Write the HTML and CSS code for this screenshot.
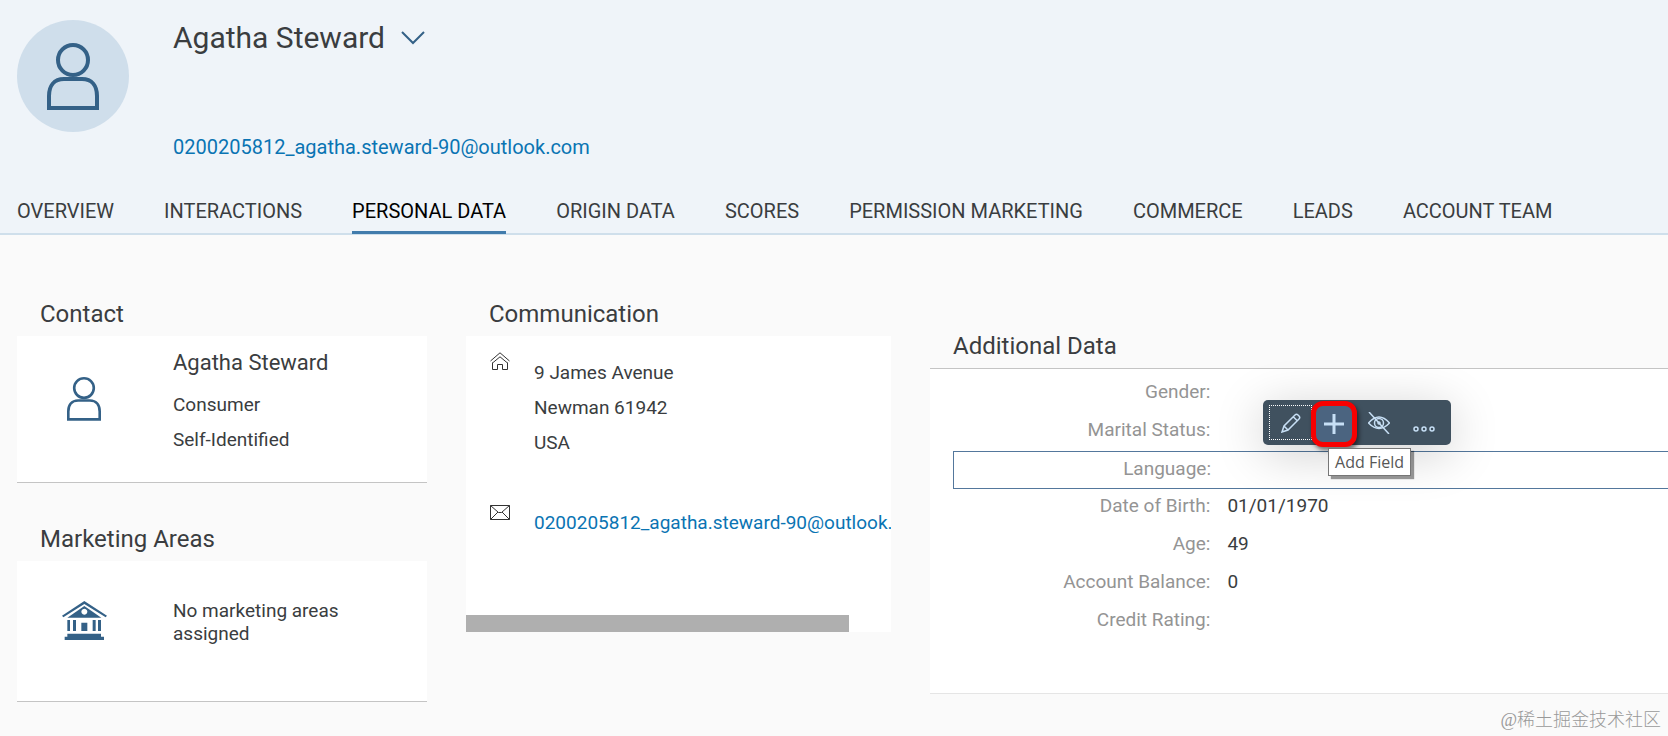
FILE: index.html
```html
<!DOCTYPE html>
<html lang="en">
  <head>
    <meta charset="UTF-8" />
    <meta name="viewport" content="width=device-width, initial-scale=1.0" />
    <title>Agatha Steward - Contact</title>
    <link rel="stylesheet" href="styles.css">
  </head>
  <body>
    <header class="header">
      <div class="profile">
        <div class="avatar">
          <svg class="person" viewBox="0 0 52 68">
            <circle cx="26" cy="18" r="15" />
            <path d="M2 66V54c0-10 5-17 15-17h18c10 0 15 7 15 17v12z" />
          </svg>
        </div>
        <div class="profile-info">
          <div class="title">
            <h1>Agatha Steward</h1>
            <button class="title-toggle" aria-label="Switch contact">
              <svg width="24" height="14" viewBox="0 0 24 14"><path d="M1 1l11 11L23 1" /></svg>
            </button>
          </div>
          <a href="mailto:0200205812_agatha.steward-90@outlook.com">0200205812_agatha.steward-90@outlook.com</a>
        </div>
      </div>
      <nav class="tabs">
        <a href="#overview">OVERVIEW</a>
        <a href="#interactions">INTERACTIONS</a>
        <a href="#personal" class="active">PERSONAL DATA</a>
        <a href="#origin">ORIGIN DATA</a>
        <a href="#scores">SCORES</a>
        <a href="#permission">PERMISSION MARKETING</a>
        <a href="#commerce">COMMERCE</a>
        <a href="#leads">LEADS</a>
        <a href="#team">ACCOUNT TEAM</a>
      </nav>
    </header>

    <main class="content">
      <div class="column">
        <section>
          <h2>Contact</h2>
          <div class="card contact">
            <div class="card-icon">
              <svg class="person small" viewBox="0 0 52 68">
                <circle cx="26" cy="18" r="15" />
                <path d="M2 66V54c0-10 5-17 15-17h18c10 0 15 7 15 17v12z" />
              </svg>
            </div>
            <div class="lines">
              <p class="name">Agatha Steward</p>
              <p>Consumer</p>
              <p>Self-Identified</p>
            </div>
          </div>
        </section>
        <section>
          <h2>Marketing Areas</h2>
          <div class="card areas">
            <div class="card-icon">
              <svg width="45" height="39" viewBox="0 0 135 117" fill="#346187">
                <path d="M67 0l68 44-4 5-64-40L4 49l-4-5z" />
                <path fill-rule="evenodd" d="M67 15l51 35H16zM67 23a9 9 0 1 0 .1 0z" />
                <path d="M16 57h8v33h-8zM33 57h9v33h-9zM58 65h18v25H58zM92 57h9v33h-9zM108 57h9v33h-9zM16 98h101v9h9v10H8v-10h8z" />
              </svg>
            </div>
            <p>No marketing areas assigned</p>
          </div>
        </section>
      </div>

      <div class="column">
        <section>
          <h2>Communication</h2>
          <div class="card communication">
            <div class="entry address">
              <svg width="20" height="18" viewBox="0 0 20 18">
                <path d="M.5 9L10 .8 19.500 9M2.500 11L10 4.800 17.500 11M2.500 10.500v7h5v-5h5v5h5v-7" />
              </svg>
              <div class="lines">
                <p>9 James Avenue</p>
                <p>Newman 61942</p>
                <p>USA</p>
              </div>
            </div>
            <div class="entry">
              <svg width="20" height="15" viewBox="0 0 20 15">
                <path d="M.5.5h19v14H.5zM.5.5L8.500 7.500h3L19.500.5M.5 14.500l7.500-7.500M19.500 14.500L12 7" />
              </svg>
              <div class="lines">
                <p><a href="mailto:0200205812_agatha.steward-90@outlook.com">0200205812_agatha.steward-90@outlook.com</a></p>
              </div>
            </div>
            <div class="scrollbar"><div class="scroll-thumb"></div></div>
          </div>
        </section>
      </div>

      <div class="column wide">
        <section>
          <h2>Additional Data</h2>
          <dl class="card form">
            <div class="row"><dt>Gender:</dt><dd></dd></div>
            <div class="row"><dt>Marital Status:</dt><dd></dd></div>
            <div class="row selected">
              <dt>Language:</dt>
              <dd>
                <div class="toolbar">
                  <button class="focused" aria-label="Rename">
                    <svg width="20" height="20" viewBox="0 0 20 20"><path d="M1 19l2-6L14 2q1.500-1.500 3 0l1 1q1.500 1.500 0 3L7 17zM3 13l4 4M12.500 4l4 4" /></svg>
                  </button>
                  <button class="add" aria-label="Add Field">
                    <svg width="20" height="20" viewBox="0 0 20 20"><path d="M10 0v20M0 10h20" /></svg>
                  </button>
                  <button aria-label="Hide">
                    <svg width="22" height="22" viewBox="0 0 22 22"><path d="M.5 11Q11-1 21.500 11 11 22 .5 11zM1 0l20 22" /><circle cx="11" cy="11" r="4.500" /><circle cx="11" cy="11" r="1" /></svg>
                  </button>
                  <button class="more" aria-label="More">
                    <svg width="22" height="6" viewBox="0 0 22 6"><circle cx="3" cy="3" r="2" /><circle cx="11" cy="3" r="2" /><circle cx="19" cy="3" r="2" /></svg>
                  </button>
                  <span class="tooltip">Add Field</span>
                </div>
              </dd>
            </div>
            <div class="row"><dt>Date of Birth:</dt><dd>01/01/1970</dd></div>
            <div class="row"><dt>Age:</dt><dd>49</dd></div>
            <div class="row"><dt>Account Balance:</dt><dd>0</dd></div>
            <div class="row"><dt>Credit Rating:</dt><dd></dd></div>
          </dl>
        </section>
      </div>
    </main>

    <div class="watermark">@稀土掘金技术社区</div>
  </body>
</html>
```

FILE: styles.css
```css
:root {
  --brand: #346187;
  --link: #0a74b3;
  --text: #3a3d40;
  --label: #949494;
  --line: #c4c4c4;
}

* {
  box-sizing: border-box;
}

body {
  margin: 0;
  min-height: 100vh;
  position: relative;
  background: #fafafa;
  color: var(--text);
  font-family: Roboto, "Liberation Sans", sans-serif;
  font-size: 19px;
  line-height: 24px;
  overflow-x: hidden;
}

h1,
h2,
p,
dl,
dd {
  margin: 0;
  font-weight: 400;
}

a {
  color: var(--link);
  text-decoration: none;
  white-space: nowrap;
}

button {
  padding: 0;
  border: 0;
  background: none;
  cursor: pointer;
}

svg {
  display: block;
  flex: none;
}

/* header */
.header {
  background: #eff4f9;
  border-bottom: 2px solid #cfdfeb;
  font-size: 20px;
}

.profile {
  display: flex;
  gap: 44px;
  padding: 20px 17px 0;
}

.avatar {
  display: flex;
  align-items: center;
  justify-content: center;
  width: 112px;
  height: 112px;
  border-radius: 50%;
  background: #cfdeeb;
}

.person {
  width: 52px;
  height: 68px;
  fill: none;
  stroke: var(--brand);
  stroke-width: 4;
}

.person.small {
  width: 34px;
  height: 45px;
}

.title {
  display: flex;
  align-items: center;
  gap: 16px;
  height: 36px;
  margin-bottom: 79px;
}

h1 {
  font-size: 30px;
  line-height: 36px;
}

.title-toggle svg {
  fill: none;
  stroke: var(--brand);
  stroke-width: 2;
}

.tabs {
  display: flex;
  gap: 50px;
  padding: 40px 17px 0;
}

.tabs a {
  height: 35px;
  margin-bottom: -1px;
  color: var(--text);
}

.tabs .active {
  color: #000;
  border-bottom: 3px solid #427cac;
}

/* cards */
.content {
  display: grid;
  grid-template-columns: 410fr 425fr 738fr;
  gap: 39px;
  padding: 65px 0 30px 17px;
}

.column {
  display: flex;
  flex-direction: column;
  gap: 42px;
  min-width: 0;
}

h2 {
  padding: 0 23px 7px;
  font-size: 24px;
  line-height: 29px;
}

.card {
  background: #fff;
}

.card-icon {
  display: flex;
  justify-content: center;
  align-items: flex-start;
  width: 134px;
  flex: none;
}

.contact,
.areas {
  display: flex;
  gap: 22px;
  border-bottom: 1px solid var(--line);
}

.contact {
  height: 147px;
  padding-top: 9px;
}

.contact .card-icon {
  padding-top: 31px;
}

.lines p {
  line-height: 35px;
}

.lines .name {
  font-size: 22px;
  margin-bottom: 7px;
}

.areas {
  height: 141px;
  padding: 38px 60px 0 0;
}

.areas .card-icon {
  padding-top: 2px;
}

.areas p {
  line-height: 23px;
}

.communication {
  display: flex;
  flex-direction: column;
  height: 296px;
  overflow: hidden;
}

.entry {
  display: flex;
  gap: 24px;
  padding: 16px 0 0 24px;
}

.entry svg {
  fill: none;
  stroke: #333;
}

.address {
  height: 153px;
}

.address .lines {
  padding-top: 3px;
}

.scrollbar {
  margin-top: auto;
}

.scroll-thumb {
  width: 90%;
  height: 17px;
  background: #afafaf;
}

.wide {
  padding-top: 32px;
}

.form {
  height: 326px;
  padding: 6px 0 0 23px;
  border-top: 1px solid var(--line);
  border-bottom: 1px solid #e5e5e5;
}

.row {
  display: flex;
  gap: 17px;
  height: 38px;
  line-height: 33px;
}

.row dt {
  width: 36%;
  color: var(--label);
  text-align: right;
}

.row dd {
  position: relative;
  flex: 1;
}

.selected {
  border: 1px solid #53779c;
  border-right: 0;
}

/* context menu over the selected field */
.toolbar {
  position: absolute;
  left: 35px;
  bottom: 43px;
  display: flex;
  align-items: center;
  width: 188px;
  height: 45px;
  padding: 5px 6px;
  border-radius: 5px;
  background: #40515f;
  box-shadow: 0 8px 50px rgba(0, 0, 0, 0.2);
}

.toolbar button {
  display: flex;
  flex: none;
  align-items: center;
  justify-content: center;
  width: 45px;
  height: 35px;
}

.toolbar svg {
  fill: none;
  stroke: #c7dff5;
  stroke-width: 1.5;
}

.toolbar .focused {
  width: 43px;
  border: 1px dotted #fff;
}

.toolbar .add {
  width: 46px;
  height: 46px;
  margin: 2px -1px 0;
  border: 5px solid #f80000;
  border-radius: 12px;
  background: #4b6480;
  box-shadow: 2px 3px 4px rgba(0, 0, 0, 0.5);
}

.toolbar .add svg {
  stroke-width: 3;
}

.toolbar .more {
  align-items: flex-end;
  padding-bottom: 8px;
}

.tooltip {
  position: absolute;
  left: 65px;
  top: 48px;
  padding: 0 6px;
  border: 1px solid #767676;
  background: #fff;
  box-shadow: 3px 3px 1px rgba(0, 0, 0, 0.4);
  color: #575757;
  font: 16px/26px "Open Sans", sans-serif;
  white-space: nowrap;
}

.watermark {
  position: absolute;
  right: 7px;
  bottom: 4px;
  color: #999;
  font-family: "Liberation Serif", "Noto Sans CJK SC", serif;
  font-size: 18px;
  font-weight: 300;
}
```
